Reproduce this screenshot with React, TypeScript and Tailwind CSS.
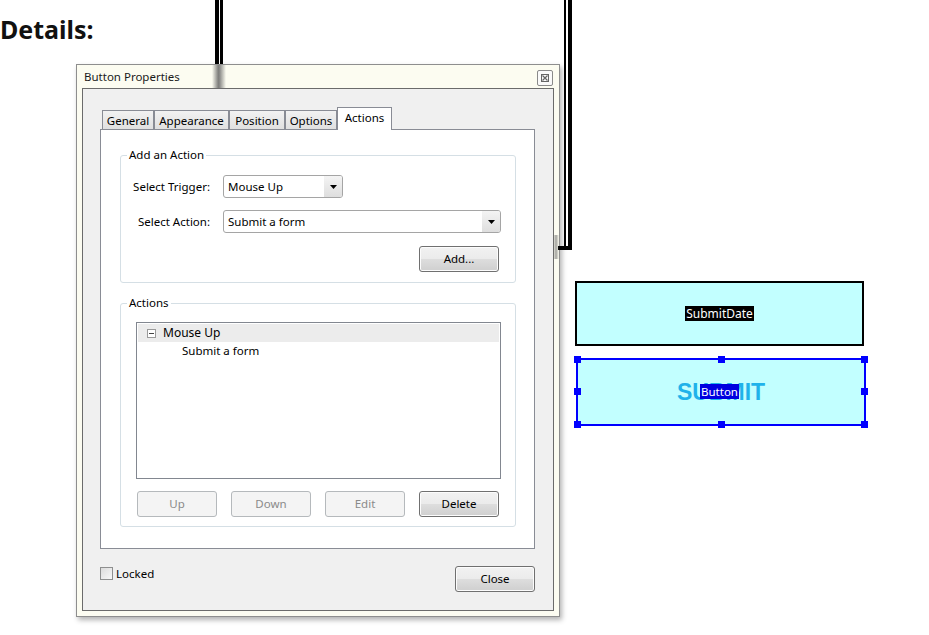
import React from "react";

function Btn({ label, disabled }: { label: string; disabled?: boolean }) {
  return (
    <div
      className={
        disabled
          ? "flex h-[26px] w-[80px] items-center justify-center rounded-[3px] border border-[#b5b9bc] bg-[#f4f4f4] text-[11.5px] text-[#8a8a8a]"
          : "flex h-[26px] w-[80px] items-center justify-center rounded-[3px] border border-[#707070] bg-[linear-gradient(#f2f2f2,#ebebeb_48%,#dddddd_52%,#cfcfcf)] text-[11.5px] text-black shadow-[inset_0_0_0_1px_#fcfcfc]"
      }
    >
      {label}
    </div>
  );
}

function Arrow() {
  return (
    <svg width="7" height="4" viewBox="0 0 7 4">
      <path d="M0 0 H7 L3.5 4 Z" fill="#000" />
    </svg>
  );
}

function Dropdown({ value, wide }: { value: string; wide?: boolean }) {
  return (
    <div
      className={`flex h-[23px] items-center overflow-hidden rounded-[3px] border border-[#a5a5a5] bg-white ${
        wide ? "w-[278px]" : "w-[120px]"
      }`}
    >
      <span className="flex-1 pl-[4px] leading-none">{value}</span>
      <span className="flex h-full w-[18px] items-center justify-center bg-[linear-gradient(#f4f4f4,#dedede)]">
        <Arrow />
      </span>
    </div>
  );
}

function Tab({ label, w, active }: { label: string; w: string; active?: boolean }) {
  return (
    <div
      className={
        active
          ? `relative z-10 flex h-[23px] items-start justify-center border border-b-0 border-[#898c95] bg-white pt-[2px] leading-[16px] ${w}`
          : `flex h-[20px] items-start justify-center border border-[#898c95] bg-[linear-gradient(#f2f2f2,#e0e0e0)] pt-[2px] leading-[16px] ${w}`
      }
    >
      {label}
    </div>
  );
}

function Handle({ cls }: { cls: string }) {
  return <div className={`absolute h-[7px] w-[7px] bg-[#0000ff] ${cls}`} />;
}

export default function App() {
  return (
    <div className="relative h-[635px] w-[929px] overflow-hidden bg-white font-['Noto_Sans','Open_Sans',sans-serif] text-[11.5px] text-black">
      {/* connector lines */}
      <div className="absolute left-[215px] top-0 h-[64px] w-[8px] border-l-[4px] border-r-[3px] border-black bg-white" />
      <div className="absolute left-[564px] top-0 h-[248px] w-[8px] border-l-[2px] border-r-[4px] border-black bg-white" />
      <div className="absolute left-[558px] top-[246px] h-[4px] w-[14px] bg-black" />

      {/* heading */}
      <div className="h-[64px] pt-[13px] text-[25px] font-bold leading-[32px] text-[#111]">Details:</div>

      {/* dialog */}
      <div className="ml-[76px] flex h-[553px] w-[484px] flex-col border border-[#8e8e8e] bg-[#fcfcf1] shadow-[2px_3px_5px_rgba(0,0,0,0.3)]">
        <div className="flex h-[23px] items-center justify-between pl-[7px] pr-[6px]">
          <span className="leading-none text-[#1a1a1a]">Button Properties</span>
          <div className="mt-[3px] flex h-[16px] w-[16px] items-center justify-center rounded-[2px] border border-[#8a8a8a] bg-[#fafafa]">
            <svg width="8" height="8" viewBox="0 0 8 8">
              <rect x="0.5" y="0.5" width="7" height="7" fill="none" stroke="#666" />
              <path d="M1.5 1.5 L6.5 6.5 M6.5 1.5 L1.5 6.5" stroke="#666" strokeWidth="1.2" />
            </svg>
          </div>
        </div>
        <div className="mx-[5px] mb-[5px] flex flex-1 flex-col border border-[#6b6b6b] bg-[#f0f0f0] px-[17px] pt-[18px]">
          {/* tabs */}
          <div className="relative z-10 -mb-px ml-[2px] flex h-[23px] items-end">
            <Tab label="General" w="w-[52px]" />
            <Tab label="Appearance" w="w-[75px]" />
            <Tab label="Position" w="w-[56px]" />
            <Tab label="Options" w="w-[52px]" />
            <Tab label="Actions" w="w-[55px]" active />
          </div>
          <div className="flex h-[420px] w-[435px] flex-col border border-[#898c95] bg-white px-[19px] pt-[25px]">
            {/* group 1 */}
            <div className="relative flex h-[128px] w-[396px] flex-col rounded-[3px] border border-[#d5dfe5] pt-[19px]">
              <span className="absolute -top-[9px] left-[6px] bg-white px-[2px] leading-[16px]">Add an Action</span>
              <div className="flex items-center">
                <span className="w-[90px] pr-px text-right">Select Trigger:</span>
                <div className="ml-[12px]">
                  <Dropdown value="Mouse Up" />
                </div>
              </div>
              <div className="mt-[12px] flex items-center">
                <span className="w-[90px] pr-px text-right">Select Action:</span>
                <div className="ml-[12px]">
                  <Dropdown value="Submit a form" wide />
                </div>
              </div>
              <div className="mt-[13px] flex justify-end pr-[16px]">
                <Btn label="Add..." />
              </div>
            </div>
            {/* group 2 */}
            <div className="relative mt-[20px] flex h-[224px] w-[396px] flex-col rounded-[3px] border border-[#d5dfe5] pl-[15px] pt-[18px]">
              <span className="absolute -top-[9px] left-[6px] bg-white px-[2px] leading-[16px]">Actions</span>
              <div className="h-[157px] w-[365px] border border-[#828790] bg-white p-px">
                <div className="flex h-[18px] items-center bg-[#ececec] pl-[9px]">
                  <span className="flex h-[9px] w-[9px] items-center justify-center border border-[#9a9a9a] bg-white">
                    <span className="h-px w-[5px] bg-[#444]" />
                  </span>
                  <span className="ml-[7px] text-[12px] leading-none">Mouse Up</span>
                </div>
                <div className="flex h-[18px] items-center pl-[44px] leading-none">Submit a form</div>
              </div>
              <div className="mt-[12px] flex gap-[14px] pl-px">
                <Btn label="Up" disabled />
                <Btn label="Down" disabled />
                <Btn label="Edit" disabled />
                <Btn label="Delete" />
              </div>
            </div>
          </div>
          {/* bottom row */}
          <div className="mt-[17px] flex items-start justify-between pr-px">
            <div className="mt-px flex items-center gap-[3px]">
              <span className="h-[13px] w-[13px] border border-[#8e8f8f] bg-[linear-gradient(135deg,#dcdcdc,#f8f8f8)]" />
              <span className="leading-none">Locked</span>
            </div>
            <Btn label="Close" />
          </div>
        </div>
      </div>

      {/* smudges */}
      <div className="absolute left-[212px] top-[65px] h-[23px] w-[14px] bg-[linear-gradient(90deg,transparent,#5e5e5e_45%,#6e6e6e_55%,transparent)] opacity-80" />
      <div className="absolute left-[553px] top-[235px] h-[24px] w-[6px] bg-[linear-gradient(90deg,transparent,#666,transparent)] opacity-60" />

      {/* canvas fields */}
      <div className="absolute left-[575px] top-[281px] flex h-[65px] w-[289px] items-center justify-center border-2 border-black bg-[#c2ffff]">
        <span className="bg-black px-px text-[12px] leading-[15px] text-white">SubmitDate</span>
      </div>
      <div className="absolute left-[576px] top-[358px] flex h-[68px] w-[290px] items-center justify-center border-2 border-[#0000ff] bg-[#c2ffff]">
        <span className="font-['Liberation_Sans',Arial,sans-serif] text-[23px] font-bold leading-none text-[#1fb2ea]">SUBMIT</span>
        <span className="absolute left-[122px] top-[24px] bg-[#0000e0] px-px text-[11.5px] leading-[15px] text-white">Button</span>
        <Handle cls="-left-[4px] -top-[4px]" />
        <Handle cls="left-[140px] -top-[4px]" />
        <Handle cls="-right-[4px] -top-[4px]" />
        <Handle cls="-left-[4px] top-[28px]" />
        <Handle cls="-right-[4px] top-[28px]" />
        <Handle cls="-left-[4px] -bottom-[4px]" />
        <Handle cls="left-[140px] -bottom-[4px]" />
        <Handle cls="-right-[4px] -bottom-[4px]" />
      </div>
    </div>
  );
}
